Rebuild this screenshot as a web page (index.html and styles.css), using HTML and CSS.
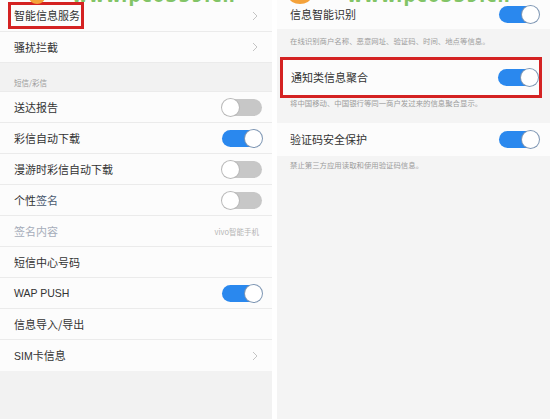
FILE: index.html
```html
<!DOCTYPE html>
<html lang="zh">
<head>
<meta charset="utf-8">
<link rel="stylesheet" href="styles.css">
</head>
<body>
<div class="page">
  <section class="panel left">
    <span class="wm-dot wm-dot-l"></span>
    <span class="wm wm-l">www.pc0359.cn</span>
    <div class="row first">
      <span class="label hl">智能信息服务</span>
      <svg class="chev" viewBox="0 0 6 10" width="6" height="10"><polyline points="1,1 5,5 1,9" fill="none" stroke="#c4c4c4" stroke-width="1"/></svg>
    </div>
    <div class="row">
      <span class="label">骚扰拦截</span>
      <svg class="chev" viewBox="0 0 6 10" width="6" height="10"><polyline points="1,1 5,5 1,9" fill="none" stroke="#c4c4c4" stroke-width="1"/></svg>
    </div>
    <div class="section-label">短信/彩信</div>
    <div class="row">
      <span class="label">送达报告</span>
      <span class="sw off"><span class="knob"></span></span>
    </div>
    <div class="row">
      <span class="label">彩信自动下载</span>
      <span class="sw on"><span class="knob"></span></span>
    </div>
    <div class="row">
      <span class="label">漫游时彩信自动下载</span>
      <span class="sw off"><span class="knob"></span></span>
    </div>
    <div class="row">
      <span class="label">个性<span class="tint">签名</span></span>
      <span class="sw off"><span class="knob"></span></span>
    </div>
    <div class="row">
      <span class="label muted">签名内容</span>
      <span class="value">vivo智能手机</span>
    </div>
    <div class="row">
      <span class="label">短信中心号码</span>
    </div>
    <div class="row">
      <span class="label latin">WAP PUSH</span>
      <span class="sw on"><span class="knob"></span></span>
    </div>
    <div class="row">
      <span class="label">信息导入/导出</span>
    </div>
    <div class="row last">
      <span class="label"><span class="latin">SIM</span>卡信息</span>
      <svg class="chev" viewBox="0 0 6 10" width="6" height="10"><polyline points="1,1 5,5 1,9" fill="none" stroke="#c4c4c4" stroke-width="1"/></svg>
    </div>
  </section>
  <section class="panel right">
    <span class="wm-dot wm-dot-r"></span>
    <span class="wm wm-r">www.pc0359.cn</span>
    <div class="rrow r1">
      <span class="label">信息智能识别</span>
      <span class="sw on"><span class="knob"></span></span>
    </div>
    <div class="desc d1">在线识别商户名称、恶意网址、验证码、时间、地点等信息。</div>
    <div class="hlbox">
      <div class="rrow r2">
        <span class="label">通知类信息聚合</span>
        <span class="sw on"><span class="knob"></span></span>
      </div>
    </div>
    <div class="desc d2">将中国移动、中国银行等同一商户发过来的信息聚合显示。</div>
    <div class="rrow r3">
      <span class="label">验证码安全保护</span>
      <span class="sw on"><span class="knob"></span></span>
    </div>
    <div class="desc d3">禁止第三方应用读取和使用验证码信息。</div>
  </section>
</div>
</body>
</html>
```
FILE: styles.css
```css
* { box-sizing: border-box; }
html, body {
  margin: 0;
  padding: 0;
  background: #ffffff;
}
body {
  width: 550px;
  height: 419px;
  overflow: hidden;
  font-family: "Noto Sans CJK SC", "Noto Sans", sans-serif;
  color: #333333;
}
.page {
  display: flex;
  gap: 5px;
  height: 419px;
}
.panel {
  position: relative;
  overflow: hidden;
  display: flex;
  flex-direction: column;
  height: 419px;
}
.left {
  width: 272px;
  background: #f2f2f2;
}
.right {
  flex: 1;
  background: #f4f4f4;
}
.row {
  display: flex;
  align-items: center;
  justify-content: space-between;
  height: 31px;
  padding: 0 12px 0 14px;
  background: #fcfcfc;
  border-bottom: 1px solid #ebebeb;
  flex: none;
}
.row.first { height: 32px; }
.row.last { border-bottom: none; }
.label {
  font-size: 11px;
  line-height: 15px;
  color: #333333;
  white-space: nowrap;
}
.latin {
  font-family: "Liberation Sans", "Noto Sans", sans-serif;
  font-size: 10.5px;
}
.label .latin { font-size: 10.5px; }
.muted { color: #a6adba; }
.tint { color: #4a5a70; }
.hl {
  display: inline-block;
  padding: 3px 1px 3px 3px;
  margin-left: -3px;
  outline: 3px solid #d42222;
}
.value {
  font-size: 7.5px;
  color: #b4b4b4;
  white-space: nowrap;
  margin-right: 1px;
}
.chev { margin-right: 2px; }
.section-label {
  height: 29px;
  flex: none;
  display: flex;
  align-items: flex-end;
  padding: 0 0 3px 14px;
  font-size: 7.5px;
  line-height: 10px;
  color: #9a9a9a;
  border-bottom: 1px solid #ebebeb;
}
.sw {
  display: flex;
  width: 40px;
  height: 17px;
  border-radius: 9px;
  flex: none;
  margin-right: -2px;
}
.sw.off {
  background: #c7c7c7;
  justify-content: flex-start;
}
.sw.on {
  background: #2a88ee;
  justify-content: flex-end;
}
.knob {
  width: 17px;
  height: 17px;
  border-radius: 50%;
  background: #ffffff;
  box-shadow: 0 0 0 1px #b8b8b8;
}
.sw.on .knob { box-shadow: 0 0 0 1px #7f97b4; }

.rrow {
  display: flex;
  align-items: center;
  justify-content: space-between;
  padding: 0 13px 0 13px;
  background: #fcfcfc;
  flex: none;
}
.r1 { height: 29px; }
.r2 { height: 35px; padding: 0 3px 0 8px; }
.r3 { height: 33px; margin-top: 0; }
.desc {
  flex: none;
  font-size: 7.4px;
  line-height: 10px;
  color: #9c9c9c;
  padding-left: 13px;
  white-space: nowrap;
}
.d1 { height: 28px; padding-top: 7px; }
.d2 { height: 25px; padding-top: 0; }
.d3 { padding-top: 4px; }
.hlbox {
  flex: none;
  border: 3px solid #d42222;
  margin: 0 8px 0 3px;
  background: #fcfcfc;
}

.wm {
  position: absolute;
  top: -14px;
  font-family: "DejaVu Sans", sans-serif;
  font-weight: bold;
  font-size: 17px;
  letter-spacing: 1px;
  color: #82c466;
  white-space: nowrap;
}
.wm-l { left: 72px; }
.wm-r { left: 70px; }
.wm-dot {
  position: absolute;
  top: -10px;
  width: 16px;
  height: 14px;
  border-radius: 50%;
  background: #f4a23a;
}
.wm-dot-l { left: 29px; }
.wm-dot-r { left: 12px; width: 22px; }
```
